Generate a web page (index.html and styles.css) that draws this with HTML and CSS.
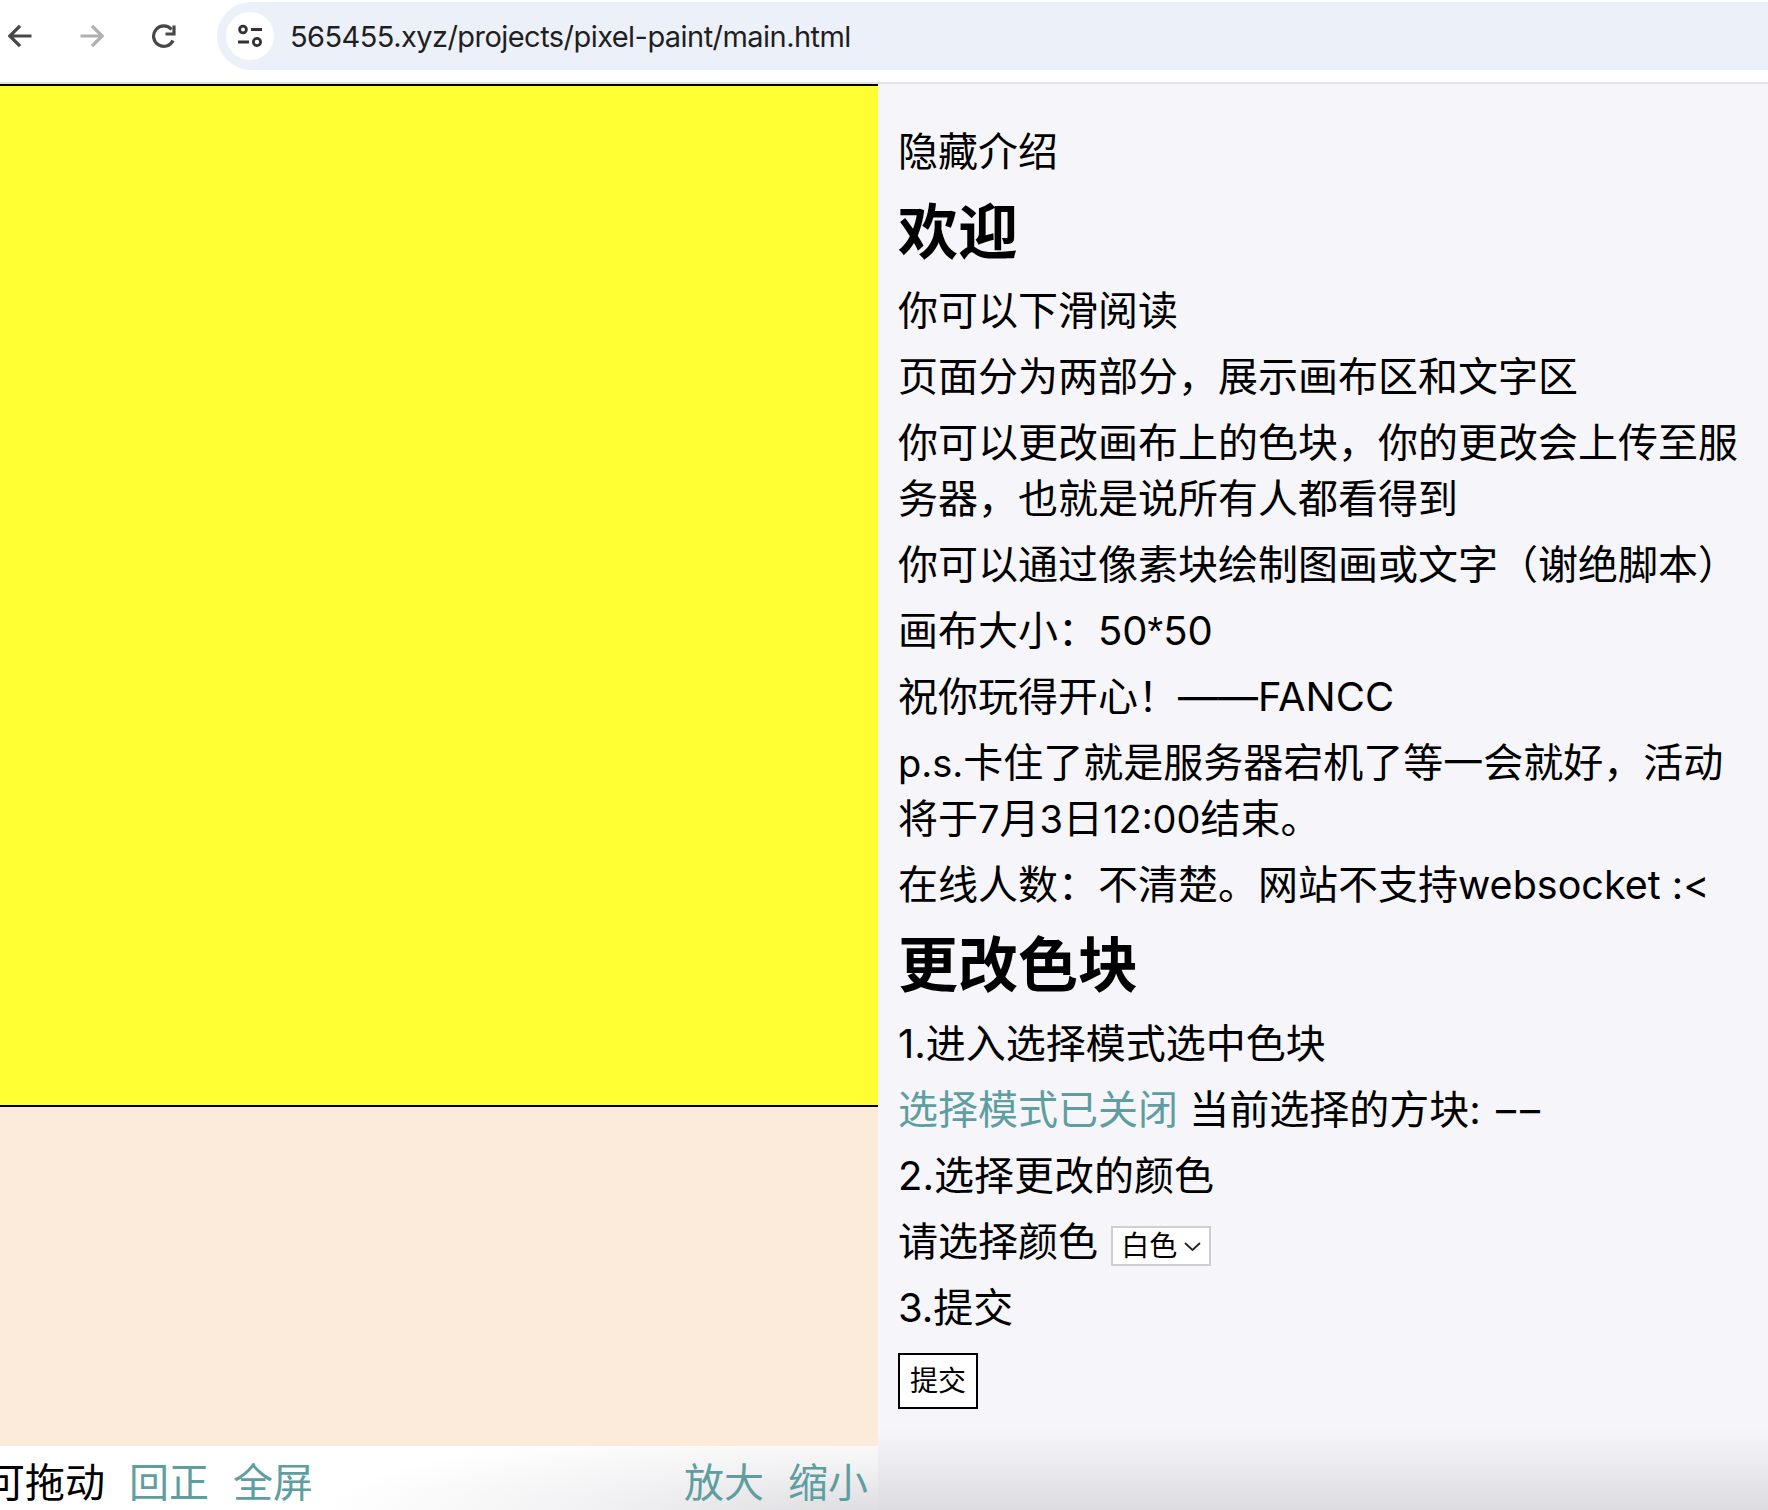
FILE: index.html
```html
<!DOCTYPE html>
<html lang="zh-CN">
<head>
<meta charset="utf-8">
<title>Pixel Paint</title>
<link rel="stylesheet" href="styles.css">
</head>
<body>
<header class="chrome">
  <svg class="nav nav-back" viewBox="0 0 24 24"><path d="M23.500 12H2M12 1.800 1.800 12 12 22.200"/></svg>
  <svg class="nav nav-forward" viewBox="0 0 24 24"><path d="M0.500 12H22M12 1.800 22.200 12 12 22.200"/></svg>
  <svg class="nav nav-reload" viewBox="0 0 26 24"><path d="M22 16.500A10.200 10.200 0 1 1 20.500 5.500"/><path d="M23 1.500V10H14.500"/></svg>
  <div class="omnibox">
    <span class="site-info"><svg viewBox="0 0 26 24"><circle cx="6" cy="5.500" r="3.400"/><path d="M14 5.500h11M1 18h11"/><circle cx="20" cy="18" r="3.600"/></svg></span>
    <span class="url">565455.xyz/projects/pixel-paint/main.html</span>
  </div>
</header>
<main class="page">
  <section class="stage">
    <div class="canvas"></div>
    <div class="void"></div>
    <div class="tools">
      <div class="tool-group tool-left">
        <span class="tool-label">可拖动</span>
        <a class="link">回正</a>
        <a class="link">全屏</a>
      </div>
      <div class="tool-group">
        <a class="link">放大</a>
        <a class="link">缩小</a>
      </div>
    </div>
  </section>
  <section class="intro">
    <p>隐藏介绍</p>
    <h2>欢迎</h2>
    <p>你可以下滑阅读</p>
    <p>页面分为两部分，展示画布区和文字区</p>
    <p>你可以更改画布上的色块，你的更改会上传至服务器，也就是说所有人都看得到</p>
    <p>你可以通过像素块绘制图画或文字（谢绝脚本）</p>
    <p>画布大小：50<span class="star">*</span>50</p>
    <p>祝你玩得开心！——FANCC</p>
    <p><span class="tight">p.s.</span>卡住了就是服务器宕机了等一会就好，活动将于<span class="tight">7</span>月<span class="tight">3</span>日<span class="tight">12:00</span>结束。</p>
    <p>在线人数：不清楚。网站不支持<span class="snug">websocket :&lt;</span></p>
    <h2>更改色块</h2>
    <p>1.进入选择模式选中色块</p>
    <p><a class="link">选择模式已关闭</a> 当前选择的方块: <span class="dashes">––</span></p>
    <p>2.选择更改的颜色</p>
    <p>请选择颜色 <span class="select">白色<svg viewBox="0 0 17 9"><path d="M1 1 8.500 8 16 1"/></svg></span></p>
    <p>3.提交</p>
    <button class="submit" type="button">提交</button>
  </section>
</main>
</body>
</html>
```
FILE: styles.css
```css
* { box-sizing: border-box; }
html, body { margin: 0; height: 100%; overflow: hidden; }
body {
  font-family: "Inter", "Noto Sans CJK SC", sans-serif;
  color: #000;
  background: #f5f5fa;
}
.chrome {
  height: 84px;
  background: #fff;
  border-bottom: 2px solid #e4e4e6;
  display: flex;
  align-items: flex-start;
  padding-top: 2px;
}
.nav { fill: none; stroke: #474747; stroke-width: 3.200; width: 24px; height: 24px; margin-top: 22px; flex: none; }
.nav-back { margin-left: 8px; }
.nav-forward { margin-left: 48px; stroke: #b0b0b0; }
.nav-reload { margin-left: 47px; width: 26px; }
.omnibox {
  margin-left: 40px;
  flex: 1;
  height: 68px;
  background: #ecf0f8;
  border-radius: 34px 0 0 34px;
  display: flex;
  align-items: center;
  padding-left: 9px;
}
.site-info {
  width: 48px; height: 48px; border-radius: 50%; background: #fff;
  display: flex; align-items: center; justify-content: center; flex: none;
}
.site-info svg { width: 26px; height: 24px; fill: none; stroke: #333; stroke-width: 2.800; }
.url { margin: 2px 0 0 16px; font: 29px/36px "Inter", sans-serif; color: #1f1f1f; letter-spacing: -0.550px; }
.page { display: flex; height: 1426px; }
.stage { width: 878px; flex: none; display: flex; flex-direction: column; overflow: hidden; }
.canvas {
  height: 1023px;
  background: #ffff33;
  border-top: 2px solid #000;
  border-bottom: 2px solid #000;
  flex: none;
}
.void { height: 339px; background: #fceada; flex: none; }
.tools {
  flex: 1;
  display: flex;
  justify-content: space-between;
  align-items: center;
  font-size: 40px;
  line-height: 56px;
  padding: 9px 10px 0 0;
  background: radial-gradient(ellipse 560px 90px at 100% 105%, #dcdce0 0%, #f1f1f3 50%, #fff 100%);
}
.tool-group { display: flex; gap: 24px; }
.tool-left { margin-left: -15px; }
.link { color: #5f9ea0; }
.intro {
  flex: 1;
  padding: 40px 20px 0 20px;
  font-size: 40px;
  line-height: 56px;
  background: linear-gradient(to bottom, #f5f5fa 0, #f5f5fa 1345px, #dcdce1 1426px);
  overflow: hidden;
}
.intro p { margin: 0 0 10px; }
.intro h2 { margin: 4px 0 9px; font-size: 60px; line-height: 84px; font-weight: 700; }
.star { font-family: "Liberation Sans", sans-serif; }
.tight { font-size: 38px; }
.snug { font-size: 39.500px; }
.dashes { letter-spacing: 4px; margin-left: 4px; }
.select {
  display: inline-flex;
  align-items: center;
  gap: 7px;
  width: 100px;
  height: 40px;
  padding-left: 8px;
  margin-left: 2px;
  background: #fff;
  border: 2px solid #cfcfcf;
  font-size: 28px;
  line-height: 36px;
  vertical-align: 0;
}
.select svg { width: 17px; height: 9px; fill: none; stroke: #222; stroke-width: 1.800; }
.submit {
  display: block;
  width: 80px;
  height: 56px;
  margin: 17px 0 0;
  padding: 0;
  background: #fff;
  border: 2px solid #000;
  font: 28px/36px "Inter", "Noto Sans CJK SC", sans-serif;
  color: #000;
}
```
